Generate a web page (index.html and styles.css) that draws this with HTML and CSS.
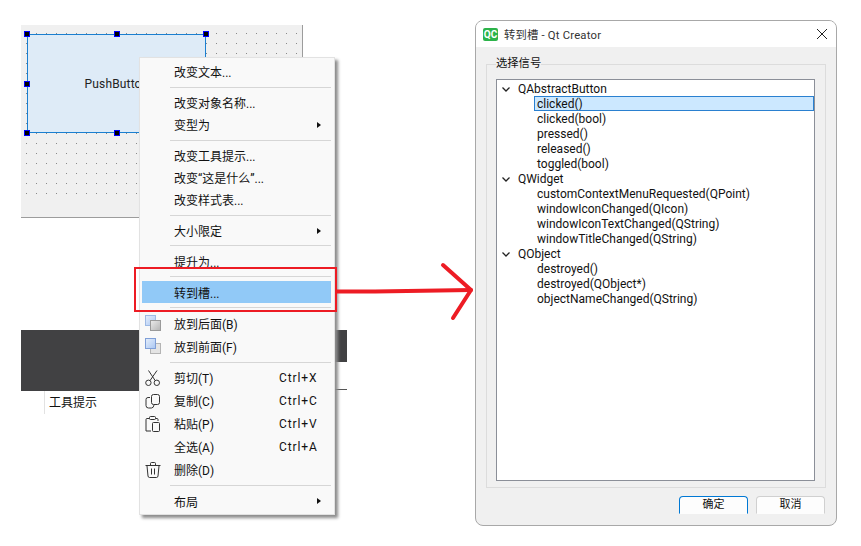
FILE: index.html
```html
<!DOCTYPE html>
<html lang="zh-CN">
<head>
    <meta charset="UTF-8">
    <meta name="viewport" content="width=device-width, initial-scale=1.0">
    <title>转到槽</title>
    <link rel="stylesheet" href="styles.css">
</head>
<body>
<div class="page">
    <section class="designer">
        <div class="form">
            <div class="push-button">
                PushButton
                <i class="handle tl"></i><i class="handle tc"></i><i class="handle tr"></i>
                <i class="handle ml"></i><i class="handle bl"></i><i class="handle bc"></i>
            </div>
        </div>
        <div class="band">
            <div class="band-main"></div>
            <div class="band-side"><div class="band-side-top"></div></div>
        </div>
        <div class="prop-cell">工具提示</div>
    </section>

    <section class="dialog">
        <header class="titlebar">
            <span class="qc-logo">QC</span>
            <span class="title-text">转到槽 - Qt Creator</span>
            <svg class="close" width="10" height="10" viewBox="0 0 10 10"><path d="M0 0L10 10M10 0L0 10" stroke="#222" stroke-width="1" fill="none"/></svg>
        </header>
        <div class="dialog-body">
            <fieldset class="group">
                <legend>选择信号</legend>
                <div class="tree">
                    <div class="row parent"><svg class="chev" width="8" height="5" viewBox="0 0 8 5"><path d="M0.5 0.5L4 4L7.5 0.5" stroke="#222" stroke-width="1.3" fill="none"/></svg>QAbstractButton</div>
                    <div class="row child selected">clicked()</div>
                    <div class="row child">clicked(bool)</div>
                    <div class="row child">pressed()</div>
                    <div class="row child">released()</div>
                    <div class="row child">toggled(bool)</div>
                    <div class="row parent"><svg class="chev" width="8" height="5" viewBox="0 0 8 5"><path d="M0.5 0.5L4 4L7.5 0.5" stroke="#222" stroke-width="1.3" fill="none"/></svg>QWidget</div>
                    <div class="row child">customContextMenuRequested(QPoint)</div>
                    <div class="row child">windowIconChanged(QIcon)</div>
                    <div class="row child">windowIconTextChanged(QString)</div>
                    <div class="row child">windowTitleChanged(QString)</div>
                    <div class="row parent"><svg class="chev" width="8" height="5" viewBox="0 0 8 5"><path d="M0.5 0.5L4 4L7.5 0.5" stroke="#222" stroke-width="1.3" fill="none"/></svg>QObject</div>
                    <div class="row child">destroyed()</div>
                    <div class="row child">destroyed(QObject*)</div>
                    <div class="row child">objectNameChanged(QString)</div>
                </div>
            </fieldset>
            <div class="buttons">
                <button class="btn default">确定</button>
                <button class="btn">取消</button>
            </div>
        </div>
    </section>
</div>

<nav class="menu">
    <div class="item"><span></span><span>改变文本...</span></div>
    <div class="sep"></div>
    <div class="item"><span></span><span>改变对象名称...</span></div>
    <div class="item"><span></span><span>变型为</span><i class="more"></i></div>
    <div class="sep"></div>
    <div class="item"><span></span><span>改变工具提示...</span></div>
    <div class="item"><span></span><span>改变“这是什么”...</span></div>
    <div class="item"><span></span><span>改变样式表...</span></div>
    <div class="sep"></div>
    <div class="item"><span></span><span>大小限定</span><i class="more"></i></div>
    <div class="sep"></div>
    <div class="item"><span></span><span>提升为...</span></div>
    <div class="sep"></div>
    <div class="item active"><span></span><span>转到槽...</span></div>
    <div class="sep"></div>
    <div class="item tall">
        <svg class="icon" width="16" height="16" viewBox="0 0 16 16">
            <defs>
                <linearGradient id="blueSq" x1="0" y1="0" x2="1" y2="1"><stop offset="0" stop-color="#e6effc"/><stop offset="1" stop-color="#a9c6f2"/></linearGradient>
                <linearGradient id="greySq" x1="0" y1="0" x2="1" y2="1"><stop offset="0" stop-color="#ececec"/><stop offset="1" stop-color="#b4b4b4"/></linearGradient>
            </defs>
            <rect x="0.5" y="0.5" width="10" height="10" fill="url(#blueSq)" stroke="#9db9e4"/>
            <rect x="5.5" y="5.5" width="10" height="10" fill="url(#greySq)" stroke="#9a9a9a"/>
        </svg>
        <span>放到后面(B)</span>
    </div>
    <div class="item tall">
        <svg class="icon" width="16" height="16" viewBox="0 0 16 16">
            <rect x="5.5" y="5.5" width="10" height="10" fill="#e4e4e4" stroke="#b4b4b4"/>
            <rect x="0.5" y="0.5" width="10" height="10" fill="url(#blueSq)" stroke="#7f9fd8"/>
        </svg>
        <span>放到前面(F)</span>
    </div>
    <div class="sep"></div>
    <div class="item tall">
        <svg class="icon" width="16" height="16" viewBox="0 0 16 16" fill="none" stroke="#333" stroke-width="1">
            <circle cx="3.4" cy="12.8" r="2.7"/><circle cx="11.8" cy="12.8" r="2.7"/>
            <path d="M3.5 0.5L10.2 10.6M12 0.5L5 10.6"/>
        </svg>
        <span>剪切(T)</span><span class="key">Ctrl+X</span>
    </div>
    <div class="item tall">
        <svg class="icon" width="16" height="16" viewBox="0 0 16 16" fill="none" stroke="#333" stroke-width="1">
            <rect x="6.5" y="1.5" width="8" height="10" rx="2"/>
            <path d="M5 4.5H3Q1 4.500 1 6.5V12.500Q1 15 3.500 15H6.500Q8.500 15 9 12"/>
        </svg>
        <span>复制(C)</span><span class="key">Ctrl+C</span>
    </div>
    <div class="item tall">
        <svg class="icon" width="16" height="16" viewBox="0 0 16 16" fill="none" stroke="#333" stroke-width="1">
            <path d="M4.5 2.5H2Q1 2.5 1 3.5V15H6M10.5 2.5H12Q13 2.5 13 3.5V5"/>
            <rect x="4.5" y="0.5" width="6" height="3" rx="1"/>
            <rect x="7.5" y="6.5" width="7" height="9" rx="1"/>
        </svg>
        <span>粘贴(P)</span><span class="key">Ctrl+V</span>
    </div>
    <div class="item tall"><span></span><span>全选(A)</span><span class="key">Ctrl+A</span></div>
    <div class="item tall">
        <svg class="icon" width="16" height="16" viewBox="0 0 16 16" fill="none" stroke="#333" stroke-width="1">
            <path d="M0.5 3.5H15.5M5.5 3V1.5Q5.5 0.5 6.5 0.5H9.5Q10.5 0.5 10.5 1.5V3"/>
            <path d="M2 4L3 14Q3.2 15.5 4.5 15.5H11.5Q12.8 15.5 13 14L14 4"/>
            <path d="M6.5 6.5V12.5M9.5 6.5V12.5"/>
        </svg>
        <span>删除(D)</span>
    </div>
    <div class="sep"></div>
    <div class="item"><span></span><span>布局</span><i class="more"></i></div>
</nav>

<div class="red-box"></div>
<svg class="red-arrow" width="140" height="62" viewBox="0 0 140 62" fill="none" stroke="#ed1c24" stroke-linecap="round" stroke-linejoin="round">
    <path d="M2 31.5H40L136 30" stroke-width="4"/>
    <path d="M108 5L136 30L118 58" stroke-width="4"/>
</svg>
</body>
</html>
```

FILE: styles.css
```css
* {
  box-sizing: border-box;
}

body {
  margin: 0;
  background: #fff;
  color: #111;
  font-family: Roboto, "Noto Sans CJK SC", sans-serif;
  font-size: 12px;
}

.page {
  display: flex;
  width: 861px;
  height: 546px;
  overflow: hidden;
}

/* left side: the form in the designer */
.designer {
  width: 475px;
  padding: 25px 0 0 21px;
}

.form {
  width: 282px;
  height: 193px;
  padding: 9px 0 0 6px;
  background-color: #f0f0f0;
  /* the bottom layer of dots stops short of the form edge */
  background-image:
    linear-gradient(#f0f0f0, #f0f0f0),
    radial-gradient(circle at 0.5px 0.5px, #8a8a8a 0.7px, transparent 0.9px);
  background-size: 100% 22px, 10px 10px;
  background-position: 0 100%, 5px 8px;
  background-repeat: no-repeat, repeat;
  border-right: 1px solid #9c9c9c;
  border-bottom: 1px solid #9c9c9c;
}

.push-button {
  position: relative;
  display: flex;
  align-items: center;
  justify-content: center;
  width: 179px;
  height: 99px;
  background: #deebf7;
  border: 1px solid #1a7fd0;
  color: #222;
  letter-spacing: 0.15px;
}

.handle {
  position: absolute;
  width: 6px;
  height: 6px;
  background: #000;
  border: 1px solid #0000ff;
}

.tl { left: -4px; top: -4px; }
.tc { left: calc(50% - 3px); top: -4px; }
.tr { right: -4px; top: -4px; }
.ml { left: -4px; top: calc(50% - 3px); }
.bl { left: -4px; bottom: -4px; }
.bc { left: calc(50% - 3px); bottom: -4px; }

.band {
  display: flex;
  margin-top: 112px;
}

.band-main {
  width: 314px;
  height: 61px;
  background: #414143;
}

.band-side {
  width: 12px;
  height: 60px;
  border-bottom: 1px solid #555;
}

.band-side-top {
  height: 32px;
  background: #414143;
}

.prop-cell {
  width: 100px;
  height: 23px;
  margin-left: 23px;
  padding-left: 4px;
  border-left: 1px solid #e2e2e2;
  line-height: 24px;
}

/* right side: the signal dialog */
.dialog {
  width: 362px;
  height: 506px;
  margin-top: 20px;
  background: #f0f0f0;
  border: 1px solid #a8a8a8;
  border-radius: 8px;
  overflow: hidden;
}

.titlebar {
  display: flex;
  align-items: center;
  height: 26px;
  padding: 0 9px 0 7px;
  background: #fff;
}

.qc-logo {
  width: 15px;
  height: 13px;
  margin-right: 6px;
  background: #2cb34a;
  border-radius: 2px;
  color: #fff;
  font-size: 10px;
  font-weight: 700;
  line-height: 13px;
  text-align: center;
}

.title-text {
  flex: 1;
  color: #333;
  font-size: 11.3px;
  letter-spacing: 0.2px;
}

.dialog-body {
  padding: 9px 10px 0;
}

.group {
  height: 432px;
  margin: 0;
  padding: 7px 10px 0 9px;
  border: 1px solid #dcdcdc;
}

.group legend {
  margin-left: 0;
  padding: 0;
  font-size: 11.3px;
  line-height: 16px;
}

.tree {
  height: 402px;
  padding-top: 1px;
  background: #fff;
  border: 1px solid #8b8f98;
}

.row {
  display: flex;
  align-items: center;
  height: 15px;
  padding-top: 1px;
  line-height: 15px;
  white-space: nowrap;
}

.parent {
  padding-left: 5px;
}

.chev {
  margin-right: 8px;
}

.child {
  margin-left: 37px;
  padding-left: 3px;
}

.selected {
  background: #cce8ff;
  outline: 1px solid #2a80d0;
  outline-offset: -1px;
}

.buttons {
  display: flex;
  justify-content: flex-end;
  gap: 8px;
  margin-top: 8px;
  padding-right: 1px;
}

.btn {
  width: 69px;
  height: 18px;
  padding: 0;
  background: #fdfdfd;
  border: 1px solid #d0d0d0;
  border-bottom-color: transparent;
  border-radius: 4px 4px 0 0;
  color: #111;
  font: inherit;
  font-size: 11px;
  line-height: 16px;
}

.default {
  border-color: #0078d4;
  border-bottom-color: transparent;
}

/* context menu sits over the form */
.menu {
  position: absolute;
  left: 139px;
  top: 57px;
  display: flex;
  flex-direction: column;
  width: 196px;
  height: 458px;
  padding: 2.6px 3px 0 2px;
  background: #f9f9f9;
  border: 1px solid #e2e2e2;
  box-shadow: 3px 3px 3px #8c8c8c;
}

.item {
  display: grid;
  grid-template-columns: 32px 105px 1fr;
  align-items: center;
  height: 22.2px;
  flex: none;
  color: #111;
}

.tall {
  height: 23px;
}

.icon {
  margin-left: 3px;
}

.sep {
  height: 1px;
  flex: none;
  margin: 3.8px 0 3.8px 28px;
  background: #d6d6d6;
}

.active {
  background: #91c9f7;
}

.key {
  letter-spacing: 0.9px;
  white-space: nowrap;
}

.more {
  justify-self: end;
  margin-right: 10px;
  width: 0;
  height: 0;
  border-left: 4px solid #111;
  border-top: 3.5px solid transparent;
  border-bottom: 3.5px solid transparent;
}

.red-box {
  position: absolute;
  left: 134px;
  top: 267px;
  width: 203px;
  height: 45px;
  border: 2px solid #ed1c24;
}

.red-arrow {
  position: absolute;
  left: 335px;
  top: 260px;
}
```
